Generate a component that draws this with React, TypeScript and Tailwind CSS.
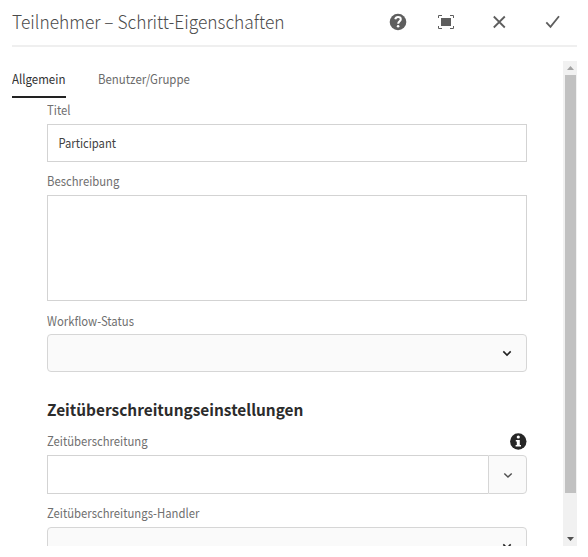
import React from 'react';

function Label({ children, className = '' }: { children: React.ReactNode; className?: string }) {
  return <label className={`block h-5 origin-left scale-x-[0.87] whitespace-nowrap text-[13px] leading-5 text-[#707070] ${className}`}>{children}</label>;
}

function Chevron({ className = '' }: { className?: string }) {
  return (
    <svg className={className} width="10" height="7" viewBox="0 0 10 7" fill="none" stroke="currentColor">
      <path d="M1.3 1.4 5 5.1 8.7 1.4" />
    </svg>
  );
}

function Header() {
  return (
    <header className="mx-3 flex h-[47px] w-[565px] shrink-0 items-center border-b-2 border-[#efefef] text-[#5e5e5e]">
      <div className="w-[377px]">
        <h1 className="-mt-[3px] origin-left scale-x-[0.939] whitespace-nowrap text-[18.5px] leading-[28px] font-light text-[#4b4b4b]">
          Teilnehmer – Schritt-Eigenschaften
        </h1>
      </div>
      <button aria-label="Hilfe" className="-mt-0.5 flex w-[18px] justify-center">
        <svg width="18" height="18" viewBox="0 0 18 18">
          <circle cx="9" cy="9" r="8.3" fill="currentColor" />
          <path d="M6.2 6.2C6.6 4.5 7.6 3.9 9 3.9c1.7 0 2.8.9 2.8 2.3 0 2-2.6 2.1-2.6 4.6" fill="none" stroke="white" strokeWidth="2" />
          <circle cx="9.1" cy="13.3" r="1.3" fill="white" />
        </svg>
      </button>
      <button aria-label="Vollbild" className="-mt-0.5 ml-[30px] flex w-[18px] justify-center">
        <svg width="18" height="18" viewBox="0 0 18 18" fill="none" stroke="currentColor">
          <path d="M1.5 5V2.5H5M13 2.5h3.5V5M16.5 13v2.5H13M5 15.5H1.5V13" strokeWidth="1" />
          <path d="M4 5h10v8H4z" fill="currentColor" stroke="none" />
        </svg>
      </button>
      <button aria-label="Schließen" className="-mt-0.5 ml-[37px] flex w-[14px] justify-center">
        <svg width="14" height="14" viewBox="0 0 14 14" fill="none" stroke="currentColor" strokeWidth="1.8">
          <path d="m1.8 1.5 11 11m0-11-11 11" />
        </svg>
      </button>
      <button aria-label="Fertig" className="-mt-0.5 ml-[39px] flex w-[15px] justify-center">
        <svg width="15" height="14" viewBox="0 0 15 14" fill="none" stroke="currentColor" strokeWidth="1.8">
          <path d="m1.3 7.4 4.2 4.5 8.5-10.7" />
        </svg>
      </button>
    </header>
  );
}

function Scrollbar() {
  return (
    <div className="flex h-[485px] w-[14px] shrink-0 flex-col items-center bg-[#f1f1f1]">
      <div className="flex h-[14px] items-center">
        <svg width="7" height="4" viewBox="0 0 7 4"><path d="M3.5 0 7 4H0z" fill="#a3a3a3" /></svg>
      </div>
      <div className="h-[418px] w-[11px] bg-[#c1c1c1]" />
      <div className="mt-auto flex h-[15px] items-center">
        <svg width="7" height="4" viewBox="0 0 7 4"><path d="M0 0h7L3.5 4z" fill="#505050" /></svg>
      </div>
    </div>
  );
}

export default function App() {
  return (
    <div className="flex h-[557px] w-[588px] flex-col overflow-hidden bg-white font-['Noto_Sans_CJK_SC','Noto_Sans',sans-serif]">
      <Header />
      <div className="mt-[14px] flex h-[485px] pl-3">
        <main className="h-[485px] w-[551px] overflow-hidden">
          <nav className="flex h-[37px] items-start gap-8 text-[13px] leading-5">
            <button className="h-[37px] w-[54px] border-b-2 border-[#222] pt-[8px] pb-[7px] text-left whitespace-nowrap text-[#323232]">
              <span className="block origin-left scale-x-[0.885]">Allgemein</span>
            </button>
            <button className="pt-[8px] whitespace-nowrap text-[#6b6b6b]">
              <span className="block origin-left scale-x-[0.88]">Benutzer/Gruppe</span>
            </button>
          </nav>
          <form className="ml-[35px] w-[480px] pt-[2px]">
            <Label>Titel</Label>
            <div className="mt-[4px] h-[38px] border border-[#d3d3d3]">
              <input className="block h-[35px] w-full origin-left scale-x-[0.865] pl-[12px] text-[13px] leading-5 text-[#424242] outline-none" defaultValue="Participant" />
            </div>
            <Label className="mt-[9px]">Beschreibung</Label>
            <textarea className="mt-1 block h-[106px] w-full resize-none border border-[#d3d3d3]" />
            <Label className="mt-[10px]">Workflow-Status</Label>
            <div className="mt-[3px] flex h-[38px] items-center justify-end rounded-[4px] border border-[#d6d6d6] bg-[#fafafa] pr-[14px]">
              <Chevron className="stroke-[1.6] text-[#222]" />
            </div>
            <h2 className="mt-[25px] h-6 origin-left scale-x-[0.963] whitespace-nowrap text-[16px] leading-6 font-bold text-[#2c2c2c]">Zeitüberschreitungseinstellungen</h2>
            <div className="mt-[10px] flex h-5 items-center justify-between">
              <Label>Zeitüberschreitung</Label>
              <svg width="18" height="18" viewBox="0 0 18 18">
                <circle cx="9.3" cy="9.5" r="8.2" fill="#262626" />
                <circle cx="9.3" cy="5" r="1.6" fill="white" />
                <path d="M6.8 8h4v5H12v1.5H6.6V13h1.2V9.5h-1z" fill="white" />
              </svg>
            </div>
            <div className="mt-1 flex h-[39px] w-[480px]">
              <input aria-label="Zeitüberschreitung" className="w-[441px] border border-r-0 border-[#d3d3d3]" />
              <div className="flex flex-1 items-center justify-center rounded-r-[4px] border border-[#d6d6d6] bg-[#fafafa]">
                <Chevron className="mt-px stroke-[1.4] text-[#505050]" />
              </div>
            </div>
            <Label className="mt-[9px]">Zeitüberschreitungs-Handler</Label>
            <div className="mt-1 flex h-[38px] items-center justify-end rounded-[4px] border border-[#d6d6d6] bg-[#fafafa] pr-[14px]">
              <Chevron className="stroke-[1.6] text-[#222]" />
            </div>
          </form>
        </main>
        <Scrollbar />
      </div>
    </div>
  );
}
